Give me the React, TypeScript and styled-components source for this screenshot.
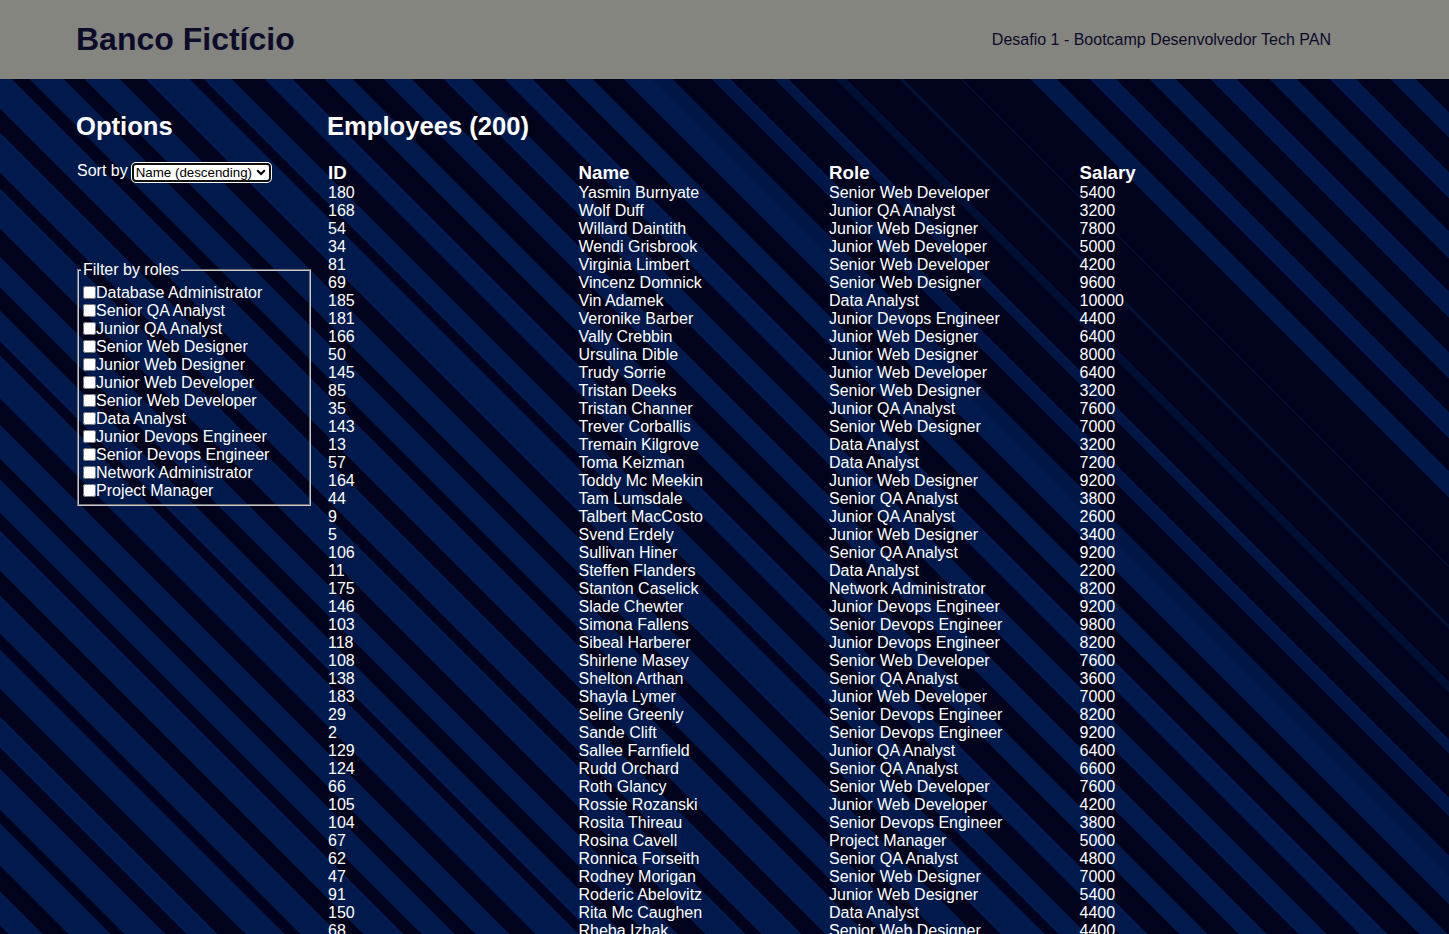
import React from "react";
import styled, { createGlobalStyle } from "styled-components";

const DARK = "#01031c";
const BLUE = "#001a4d";
const H = 855;

type Band = [number, number, string];

function buildBands(): Band[] {
  const out: Band[] = [];
  // region A: mostly blue, dark gaps of varying width
  const gaps = [20, 26, 14, 22, 28, 16, 24, 18];
  let d = -900;
  let i = 0;
  while (d < 150) {
    const g = gaps[i % gaps.length];
    const blue = 58 - g + ((i * 7) % 11) - 5;
    out.push([d, d + blue, BLUE]);
    d += blue + g;
    i++;
  }
  // region B: alternating
  for (let b = d; b < 650; b += 60) out.push([b, b + 28, BLUE]);
  // region C: thin fading stripes
  let w = 22;
  for (let c = 650; c < 1000; c += 62) {
    out.push([c, c + w, w > 12 ? "#001646" : "#000f34"]);
    w = Math.max(3, w - 4);
  }
  // region D: wider stripes towards top right
  for (let e = 1030; e < 1480; e += 60) out.push([e, e + 26, "#00184a"]);
  return out;
}

function stripeGradient(bands: Band[]): string {
  const p = (d: number) => `${((d + H) / Math.SQRT2).toFixed(1)}px`;
  const stops: string[] = [];
  bands.forEach(([a, z, c]) => {
    stops.push(`${DARK} ${p(a)}`, `${c} ${p(a)}`, `${c} ${p(z)}`, `${DARK} ${p(z)}`);
  });
  return `linear-gradient(45deg, ${DARK} 0px, ${stops.join(", ")}, ${DARK} 100%)`;
}

const STRIPES = stripeGradient(buildBands());

const GlobalStyle = createGlobalStyle`
  html, body {
    margin: 0;
    padding: 0;
    background: ${DARK};
    font-family: "Liberation Sans", Arial, sans-serif;
  }
`;

const Page = styled.div`
  display: flex;
  flex-direction: column;
  min-height: 100vh;
`;

const Header = styled.header`
  height: 79px;
  background: #858580;
  display: flex;
  align-items: center;
`;

const HeaderInner = styled.div`
  width: 1255px;
  margin-left: 76px;
  display: flex;
  align-items: center;
  justify-content: space-between;
`;

const Brand = styled.h1`
  margin: 0;
  font-size: 32px;
  font-weight: bold;
  color: #0c0b2a;
`;

const Subtitle = styled.span`
  font-size: 16px;
  color: #0c0b2a;
`;

const Main = styled.main`
  flex: 1;
  background-color: ${DARK};
  background-image: ${STRIPES};
  background-size: 1449px ${H}px;
  background-repeat: no-repeat;
  background-position: 0 0;
  padding-top: 12px;
  color: #ffffff;
`;

const Container = styled.div`
  width: 1255px;
  margin-left: 77px;
  display: grid;
  grid-template-columns: 251px 1004px;
  align-items: start;
`;

const Heading = styled.h2`
  margin: 21px 0 21px -1px;
  font-size: 25.6px;
  font-weight: bold;
  line-height: normal;
`;

const SortLine = styled.label`
  display: block;
  font-size: 16px;
  line-height: 18px;
  height: 19px;
`;

const SelectWrap = styled.span`
  position: relative;
  display: inline-block;
  margin-left: 4px;
  vertical-align: top;
  height: 19px;
  margin-top: 1px;
`;

const SortSelect = styled.select`
  appearance: none;
  -webkit-appearance: none;
  display: block;
  font-family: "Liberation Sans", Arial, sans-serif;
  font-size: 13.33px;
  line-height: 15px;
  width: 139px;
  height: 19px;
  margin: 0;
  padding: 0 0 0 2px;
  border: 2px solid #101010;
  border-radius: 4px;
  box-shadow: 0 0 0 1px #ffffff;
  background: #ffffff;
  color: #000000;
  box-sizing: border-box;
`;

const Chevron = styled.svg`
  position: absolute;
  right: 5px;
  top: 6px;
  width: 10px;
  height: 7px;
  pointer-events: none;
`;

const RoleSet = styled.fieldset`
  margin: 80px 0 0 0;
  padding: 5px 2px 4px 2px;
  width: 234px;
  box-sizing: border-box;
  border: 2px groove #c8c8c8;
  font-size: 16px;
  line-height: 18px;
`;

const Legend = styled.legend`
  padding: 0 2px;
  font-size: 16px;
`;

const RoleRow = styled.label`
  display: flex;
  align-items: center;
  height: 18px;
  white-space: nowrap;
`;

const RoleCheck = styled.input`
  width: 13px;
  height: 13px;
  margin: 0 0 1px 2px;
`;

const Table = styled.table`
  width: 1002px;
  table-layout: fixed;
  border-collapse: collapse;
  border-spacing: 0;
  color: #ffffff;
`;

const Th = styled.th`
  text-align: left;
  padding: 0;
  font-size: 18.72px;
  font-weight: bold;
  line-height: 21.5px;
`;

const Td = styled.td`
  padding: 0;
  font-size: 16px;
  line-height: 18px;
  white-space: nowrap;
`;

const roles = [
  "Database Administrator",
  "Senior QA Analyst",
  "Junior QA Analyst",
  "Senior Web Designer",
  "Junior Web Designer",
  "Junior Web Developer",
  "Senior Web Developer",
  "Data Analyst",
  "Junior Devops Engineer",
  "Senior Devops Engineer",
  "Network Administrator",
  "Project Manager",
];

const employees: [number, string, string, number][] = [
  [180, "Yasmin Burnyate", "Senior Web Developer", 5400],
  [168, "Wolf Duff", "Junior QA Analyst", 3200],
  [54, "Willard Daintith", "Junior Web Designer", 7800],
  [34, "Wendi Grisbrook", "Junior Web Developer", 5000],
  [81, "Virginia Limbert", "Senior Web Developer", 4200],
  [69, "Vincenz Domnick", "Senior Web Designer", 9600],
  [185, "Vin Adamek", "Data Analyst", 10000],
  [181, "Veronike Barber", "Junior Devops Engineer", 4400],
  [166, "Vally Crebbin", "Junior Web Designer", 6400],
  [50, "Ursulina Dible", "Junior Web Designer", 8000],
  [145, "Trudy Sorrie", "Junior Web Developer", 6400],
  [85, "Tristan Deeks", "Senior Web Designer", 3200],
  [35, "Tristan Channer", "Junior QA Analyst", 7600],
  [143, "Trever Corballis", "Senior Web Designer", 7000],
  [13, "Tremain Kilgrove", "Data Analyst", 3200],
  [57, "Toma Keizman", "Data Analyst", 7200],
  [164, "Toddy Mc Meekin", "Junior Web Designer", 9200],
  [44, "Tam Lumsdale", "Senior QA Analyst", 3800],
  [9, "Talbert MacCosto", "Junior QA Analyst", 2600],
  [5, "Svend Erdely", "Junior Web Designer", 3400],
  [106, "Sullivan Hiner", "Senior QA Analyst", 9200],
  [11, "Steffen Flanders", "Data Analyst", 2200],
  [175, "Stanton Caselick", "Network Administrator", 8200],
  [146, "Slade Chewter", "Junior Devops Engineer", 9200],
  [103, "Simona Fallens", "Senior Devops Engineer", 9800],
  [118, "Sibeal Harberer", "Junior Devops Engineer", 8200],
  [108, "Shirlene Masey", "Senior Web Developer", 7600],
  [138, "Shelton Arthan", "Senior QA Analyst", 3600],
  [183, "Shayla Lymer", "Junior Web Developer", 7000],
  [29, "Seline Greenly", "Senior Devops Engineer", 8200],
  [2, "Sande Clift", "Senior Devops Engineer", 9200],
  [129, "Sallee Farnfield", "Junior QA Analyst", 6400],
  [124, "Rudd Orchard", "Senior QA Analyst", 6600],
  [66, "Roth Glancy", "Senior Web Developer", 7600],
  [105, "Rossie Rozanski", "Junior Web Developer", 4200],
  [104, "Rosita Thireau", "Senior Devops Engineer", 3800],
  [67, "Rosina Cavell", "Project Manager", 5000],
  [62, "Ronnica Forseith", "Senior QA Analyst", 4800],
  [47, "Rodney Morigan", "Senior Web Designer", 7000],
  [91, "Roderic Abelovitz", "Junior Web Designer", 5400],
  [150, "Rita Mc Caughen", "Data Analyst", 4400],
  [68, "Rheba Izhak", "Senior Web Designer", 4400],
];

export default function App() {
  return (
    <Page>
      <GlobalStyle />
      <Header>
        <HeaderInner>
          <Brand>Banco Fictício</Brand>
          <Subtitle>Desafio 1 - Bootcamp Desenvolvedor Tech PAN</Subtitle>
        </HeaderInner>
      </Header>
      <Main>
        <Container>
          <aside>
            <Heading>Options</Heading>
            <SortLine>
              Sort by
              <SelectWrap>
                <SortSelect defaultValue="name-desc">
                  <option value="name-asc">Name (ascending)</option>
                  <option value="name-desc">Name (descending)</option>
                  <option value="salary-asc">Salary (ascending)</option>
                  <option value="salary-desc">Salary (descending)</option>
                </SortSelect>
                <Chevron viewBox="0 0 10 7" aria-hidden="true">
                  <path d="M1.2 1.2 L5 5 L8.8 1.2" fill="none" stroke="#000" strokeWidth="2" />
                </Chevron>
              </SelectWrap>
            </SortLine>
            <RoleSet>
              <Legend>Filter by roles</Legend>
              {roles.map((r) => (
                <RoleRow key={r}>
                  <RoleCheck type="checkbox" />
                  {r}
                </RoleRow>
              ))}
            </RoleSet>
          </aside>
          <section>
            <Heading>Employees (200)</Heading>
            <Table>
              <thead>
                <tr>
                  <Th>ID</Th>
                  <Th>Name</Th>
                  <Th>Role</Th>
                  <Th>Salary</Th>
                </tr>
              </thead>
              <tbody>
                {employees.map(([id, name, role, salary]) => (
                  <tr key={id}>
                    <Td>{id}</Td>
                    <Td>{name}</Td>
                    <Td>{role}</Td>
                    <Td>{salary}</Td>
                  </tr>
                ))}
              </tbody>
            </Table>
          </section>
        </Container>
      </Main>
    </Page>
  );
}
